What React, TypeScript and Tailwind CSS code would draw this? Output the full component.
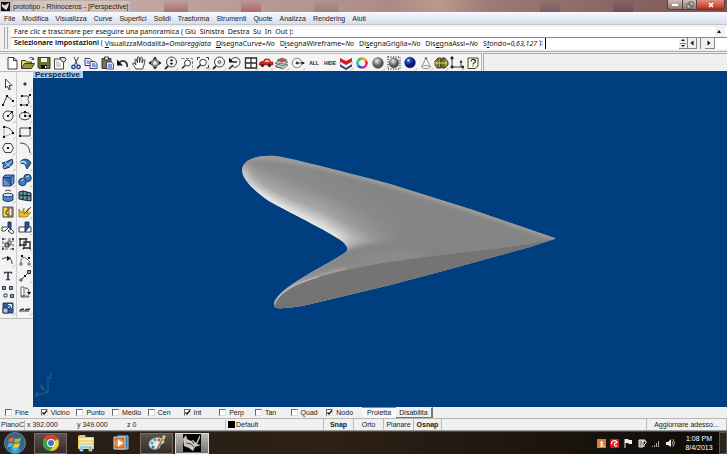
import type { ReactNode } from 'react';

const MENUS = ['File', 'Modifica', 'Visualizza', 'Curve', 'Superfici', 'Solidi', 'Trasforma', 'Strumenti', 'Quote', 'Analizza', 'Rendering', 'Aiuti'];

// before / underlined letter / after / value
const OPTIONS = [
  ['', 'V', 'isualizzaModalità=', 'Ombreggiata'],
  ['', 'D', 'isegnaCurve=', 'No'],
  ['D', 'i', 'segnaWireframe=', 'No'],
  ['Di', 's', 'egnaGriglia=', 'No'],
  ['Dis', 'e', 'gnaAssi=', 'No'],
  ['S', 'f', 'ondo=', '0,63,127'],
];

const OSNAPS: [string, boolean][] = [
  ['Fine', false], ['Vicino', true], ['Punto', false], ['Medio', false], ['Cen', false],
  ['Int', true], ['Perp', false], ['Tan', false], ['Quad', false], ['Nodo', true],
];

const Corner = () => <path d="M13 15.500l2.500-2.500" stroke="#aaa" />;

const lens = (
  <>
    <circle cx="8.500" cy="7" r="5" fill="#f7f7f7" />
    <path d="M5 11l-3 3" strokeWidth="1.800" />
  </>
);

const TOOLBAR: [string, ReactNode][] = [
  ['Nuovo', <path d="M4 2.500h5.500l3.500 3v8.500H4zM9.500 2.500v3h3.500" fill="#fff" />],
  ['Apri', <>
    <path d="M1.500 13V5.500h4l1 1.500h5v2" fill="#e8dc58" />
    <path d="M1.500 13.500l3-5h10l-3 5z" fill="#9c9638" />
    <path d="M9 3.500c2-2 4-1 4.500 1m0 0v-2m0 2h-2" />
  </>],
  ['Salva', <>
    <path d="M2 2.500h12v11H3l-1-1z" fill="#6b722d" />
    <path d="M5 3h6v4H5z" fill="#eee" stroke="none" />
    <path d="M5 10h6v3.500H5z" fill="#111" stroke="none" />
    <path d="M9 11h1.500v2H9z" fill="#eee" stroke="none" />
  </>],
  ['Proprietà', <>
    <path d="M2.500 4h9v10h-9z" fill="#fff" />
    <path d="M8 2.500h5l1 2-2 3-3-2z" fill="#d8dfe8" />
    <path d="M4 7h3M4 9h5M4 11h5" stroke="#999" />
  </>],
  ['Taglia', <>
    <path d="M6 2l3.500 8M10.500 2L6.500 10" stroke="#223" />
    <g stroke="#2747a8" strokeWidth="1.500"><circle cx="5.500" cy="12" r="1.700" /><circle cx="10.500" cy="12" r="1.700" /></g>
  </>],
  ['Copia', <>
    <path d="M2 3.500h5l2 2v5H2z" fill="#fff" stroke="#224" />
    <path d="M7 6.500h5l2 2v5H7z" fill="#dbe6ff" stroke="#233f91" />
    <path d="M3.500 6h3M3.500 8h3M9 9h3M9 11h4" stroke="#233f91" />
  </>],
  ['Incolla', <>
    <path d="M3 3.500h9v10H3z" fill="#77743c" />
    <path d="M5.500 2h4v3h-4z" fill="#ddd" />
    <path d="M7.500 7h5l2 2v5h-7z" fill="#dbe6ff" stroke="#233f91" />
    <path d="M9 10h4M9 12h4" stroke="#233f91" />
  </>],
  ['Annulla', <><path d="M4 8c3-4 9-2 8 4" strokeWidth="1.700" /><path d="M2 4.500v6h6z" fill="#111" stroke="none" /><Corner /></>],
  ['Panoramica', <path d="M5 14c-1-2-3-4-3.500-5.500C2 7.500 3.500 8 5 10L3.800 5c.5-1.500 1.700-1 2 0L6.500 8 6.300 3c.5-1.500 1.800-1.500 2 0l.3 4.500L9.500 3c.5-1.300 1.800-1 1.800.3L11 8l1.300-3c.6-1 1.600-.5 1.500.5-.3 3-1 6-2.300 8.500z" fill="#fff" />],
  ['Ruota vista', <>
    <ellipse cx="8" cy="8" rx="5" ry="2.300" stroke="#555" /><ellipse cx="8" cy="8" rx="2.300" ry="5" stroke="#555" />
    <path d="M8 1.500l2 3H6zM8 14.500l2-3H6zM1.500 8l3-2v4zM14.500 8l-3-2v4z" fill="#111" stroke="none" />
  </>],
  ['Zoom dinamico', <>{lens}<path d="M8.500 4l1.500 2H7zM8.500 10l1.500-2H7z" fill="#111" strokeWidth=".5" /><Corner /></>],
  ['Zoom finestra', <>
    <path d="M2.500 3.500h11v9" strokeDasharray="3 1.500" stroke="#666" /><circle cx="8.500" cy="8" r="3" fill="#fff" /><path d="M6 10.500L3 13.500" strokeWidth="1.600" /><Corner />
  </>],
  ['Zoom estensioni', <>
    <path d="M2.500 5V2.500H5M11 2.500h2.500V5M13.500 10v3H11" /><circle cx="8" cy="7.500" r="3.300" fill="#fff" /><path d="M5.500 10L2 13.500" strokeWidth="1.600" /><Corner />
  </>],
  ['Zoom selezionati', <>{lens}<circle cx="8.500" cy="7" r="1.500" fill="#ddd86d" strokeWidth=".7" /><Corner /></>],
  ['Vista precedente', <>
    <path d="M4 5c3-4 9-3 9 2 0 4-5 7-8 4" /><path d="M2 2.500v5h5z" fill="#111" stroke="none" /><path d="M6 10l-4 4M6 7h4" strokeWidth="1.500" />
  </>],
  ['Quattro viste', <><path d="M2.500 3h11v10h-11zM8 3v10M2.500 8h11" fill="#fff" strokeWidth="1.300" /><Corner /></>],
  ['Vista destra', <>
    <path d="M1 10l1-3 3-.5L7 4h4l2 3h2v3z" fill="#d62616" stroke="#8b150b" strokeWidth=".6" />
    <path d="M7.500 5h3l1 2H6.500z" fill="#fbb" stroke="none" />
    <circle cx="4.500" cy="10.500" r="1.200" fill="#111" /><circle cx="11.500" cy="10.500" r="1.200" fill="#111" /><Corner />
  </>],
  ['Piano C', <>
    <path d="M1 11l5-3 8 2-5 4zM1 8l5-3 8 2-5 4z" fill="#cbd5c1" stroke="#667" />
    <path d="M3 5l5-2 5 2-5 2z" fill="#d34f42" stroke="#744" strokeWidth=".6" /><path d="M2 12l6 1" stroke="#287b3a" /><Corner />
  </>],
  ['Osnap', <>
    <circle cx="7" cy="8" r="4.800" stroke="#777" /><circle cx="7" cy="8" r="1" fill="#111" /><path d="M7 8h7" /><path d="M15 8l-3-1.500v3z" fill="#111" stroke="none" /><Corner />
  </>],
  ['Seleziona tutto', <text x="8" y="10" textAnchor="middle" fontSize="5" fontWeight="700" fill="#222" stroke="none">ALL</text>],
  ['Nascondi', <text x="8" y="10" textAnchor="middle" fontSize="5" fontWeight="700" fill="#222" stroke="none">HIDE</text>],
  ['Livelli', <>
    <path d="M2 9l6 4 6-4v2.500L8 15l-6-3.500z" fill="#273c91" stroke="none" />
    <path d="M2 6.500L8 10l6-3.500V9l-6 3.500L2 9z" fill="#fff" stroke="#888" strokeWidth=".5" />
    <path d="M2 3l6 3 6-3v3.500L8 10 2 6.500z" fill="#d91a21" stroke="none" /><Corner />
  </>],
  ['Proprietà oggetto', <g strokeWidth="2.500" fill="none">
    <path d="M8 3.500a4.500 4.500 0 0 1 4 2.300" stroke="#f2a31b" /><path d="M12 5.800a4.500 4.500 0 0 1 0 4.500" stroke="#e32632" />
    <path d="M12 10.300A4.500 4.500 0 0 1 8 12.500" stroke="#cf2ac0" /><path d="M8 12.500a4.500 4.500 0 0 1-4-2.200" stroke="#3547db" />
    <path d="M4 10.300a4.500 4.500 0 0 1 0-4.500" stroke="#20bad4" /><path d="M4 5.800A4.500 4.500 0 0 1 8 3.500" stroke="#43c64b" />
  </g>],
  ['Ombreggia', <><circle cx="8" cy="8" r="5.300" fill="url(#gray-ball)" stroke="#444" strokeWidth=".6" /><Corner /></>],
  ['Ombreggia selezione', <>
    <path d="M2 2h12v12H2z" strokeDasharray="1 1.500" strokeWidth="2" stroke="#777" />
    <circle cx="8" cy="8" r="4.800" fill="url(#gray-ball)" stroke="#444" strokeWidth=".6" />
  </>],
  ['Rendering', <><circle cx="8" cy="7.500" r="5.300" fill="url(#blue-ball)" stroke="#111c65" strokeWidth=".6" /><Corner /></>],
  ['Faretto', <><path d="M8 3l-4.500 9c2 2 7 2 9 0zM3.500 12c2-2 7-2 9 0" fill="#f8f8f8" stroke="#888" /><path d="M7 4L8 2.500l1 1.500" /><Corner /></>],
  ['Opzioni', <>
    <path d="M2 6l2-2 1-1h3v10H4l-2-3zM9 3h3l3 4v3l-3 3H9z" fill="#a6a42f" />
    <path d="M5 3v10M8 4v9M11 3v10" /><path d="M2 8h12" stroke="#eceb91" /><Corner />
  </>],
  ['Quote', <>
    <path d="M3 3v9h11M12 7v5" /><path d="M2 2h2v2H2zM2 11h2v2H2zM13 11h1.500v2H13z" fill="#111" /><path d="M12 5l1.500 2.500h-3z" fill="#111" stroke="none" /><Corner />
  </>],
  ['Guida', <>
    <path d="M3 3h10v8l-3 2.500H3z" fill="#fffedb" />
    <path d="M6 6.500c0-3 4.500-2.500 4.500 0 0 1.500-2.500 1-2.500 3M8 10.500v1" strokeWidth="1.200" />
  </>],
];

const solidNode = (x: number, y: number) => <path d={`M${x - 1} ${y - 1}h2v2h-2z`} fill="#111" stroke="none" />;
const blueNode = (x: number, y: number) => <path d={`M${x - 1.5} ${y - 1.5}h3v3h-3z`} fill="#7ba5d5" stroke="#223" />;

const PALETTE: [string, ReactNode][] = [
  ['Seleziona', <path d="M5.500 3v9l2-2 1.500 4 1.500-.7L9 9.500h3z" fill="#fff" />],
  ['Punto', <><path d="M7 7h2v2H7z" fill="#555" /><Corner /></>],
  ['Polilinea', <><path d="M3 13L7 4l6 5" />{solidNode(3, 13)}{solidNode(7, 4)}{solidNode(13, 9)}<Corner /></>],
  ['Curva', <><path d="M6 4h4c4 0 0 3 1 4s2 3-1 5H4" /><path d="M4 4v9" stroke="#aaa" strokeDasharray="1 1" />{solidNode(5, 4)}{solidNode(13, 3)}{solidNode(4, 13)}{solidNode(10, 13)}<Corner /></>],
  ['Cerchio', <><circle cx="8" cy="8" r="5" /><path d="M8 8l3-3" />{solidNode(8, 8)}{solidNode(12, 4)}<Corner /></>],
  ['Ellisse', <><ellipse cx="8" cy="8" rx="5.500" ry="3.800" /><path d="M8 4v4h5" stroke="#777" />{solidNode(8, 8)}{solidNode(8, 4)}{solidNode(13, 8)}<Corner /></>],
  ['Arco', <><path d="M4 3c5 0 8 3 9 6" /><path d="M4 3v10l9-4" strokeDasharray="1.500 1" stroke="#666" />{solidNode(4, 3)}{solidNode(4, 13)}{solidNode(13, 9)}<Corner /></>],
  ['Rettangolo', <><path d="M3 4h10v8H3z" />{solidNode(3, 12)}{solidNode(13, 4)}<Corner /></>],
  ['Poligono', <><path d="M5 3.500h6L13.500 8 11 12.500H5L2.500 8z" />{solidNode(8, 8)}<Corner /></>],
  ['Raccordo', <><path d="M3 3c6 0 9 3 10 10" /><Corner /></>],
  ['Superficie', <><path d="M2 7l4-1 6-3 1 4-3 4-6 2-1-2 1-2z" fill="#4778b5" stroke="#152b52" /><path d="M4 12l8-7M5 6l6 5" stroke="#c8e3ff" /><Corner /></>],
  ['Superficie da curve', <><path d="M3 7c1-5 9-5 11 0l-4 6-2-5z" fill="#3370b2" stroke="#142d55" /><path d="M3 7c3-2 5-2 6 1" stroke="#e2f0ff" strokeWidth="1.500" /><Corner /></>],
  ['Parallelepipedo', <><path d="M3 5l2-2h9v8l-3 3H3z" fill="#668fcb" stroke="#17366e" /><path d="M3 5.500h8V14" fill="#3861a0" stroke="#17366e" /><path d="M11 5l3-2" stroke="#17366e" /><Corner /></>],
  ['Unione booleana', <><g fill="#447bc0" stroke="#14325e"><circle cx="10.500" cy="6" r="3.800" /><circle cx="5.500" cy="10" r="3.800" /></g><path d="M4 9l3-2M9 5l3-1" stroke="#c9e0fa" /><Corner /></>],
  ['Proietta curva', <><path d="M3 7h10v5c-3 2-7 2-10 0z" fill="#5685be" stroke="#17366e" /><ellipse cx="8" cy="7" rx="5" ry="1.800" fill="#d3e2f6" stroke="#17366e" /><path d="M5 3c2-1 4-1 6 0" /><Corner /></>],
  ['Mesh', <><path d="M2 4l4-1 8 2v8l-7-1-5-1z" fill="#6699a3" stroke="#112" /><path d="M6 3v9M10 4v8M2 7l12 1" stroke="#112" /></>],
  ['Unisci', <><path d="M3 3h10v10H3z" fill="#f8dc44" stroke="#333" /><path d="M8 3v4H6v3h2v3" /><path d="M9 4h3v8H9z" fill="#eee" stroke="#555" /></>],
  ['Esplodi', <><path d="M2 5l3 4 2-5v6l5-6-2 6 4-2-4 5H2z" fill="#f5bd18" stroke="#765d0b" strokeWidth=".6" /><path d="M7 10l7-7" /><Corner /></>],
  ['Tronca', <><path d="M2 7h7l-4 4H2z" fill="#fff" /><path d="M8 2h3v7l-3-2z" fill="#25549d" stroke="#142d55" /><path d="M8 11l3-2 3 3-2 2z" fill="#eee" /></>],
  ['Suddividi', <><path d="M2 7h12v5H2z" fill="#fff" /><path d="M8 2h4v5l-4 5z" fill="#25549d" stroke="#142d55" /><Corner /></>],
  ['Raggruppa', <><path d="M3 3h10v10H3z" strokeDasharray="3 2" stroke="#555" /><path d="M5 7h4v4H5z" fill="#aaa" /><path d="M8 5h3v4H8z" /><path d="M2.500 2.500h1v1h-1zM12.500 2.500h1v1h-1zM2.500 12.500h1v1h-1zM12.500 12.500h1v1h-1z" fill="#111" /></>],
  ['Separa', <><path d="M3 3h6v6H3zM7 6h6v6H7z" strokeWidth="1.300" /><path d="M2.500 2.500h1v1h-1zM9 2.500h1v1H9zM2.500 9h1v1h-1zM12.500 12h1v1h-1zM6 12h1v1H6z" fill="#111" /><Corner /></>],
  ['Modifica punti', <><path d="M2 7c6-3 10-1 10 5" /><path d="M7 4l4 2-4 3z" fill="#111" stroke="none" /><Corner /></>],
  ['Punti di controllo', <><path d="M4 12C3 4 7 3 13 10" stroke="#666" />{solidNode(5, 4)}{solidNode(12, 6)}<path d="M3 11h2v2H3zM11 11h2v2h-2z" fill="#fff" stroke="#555" /><Corner /></>],
  ['Testo', <text x="8" y="12" textAnchor="middle" fontSize="13" fontFamily="Liberation Serif, serif" fill="#222" stroke="#222" strokeWidth=".3">T</text>],
  ['Sposta', <><path d="M5 11l6-6" />{blueNode(12, 4)}<path d="M3 11h2v2H3z" fill="#fff" />{solidNode(8, 8)}<Corner /></>],
  ['Copia oggetto', <>{blueNode(4, 4)}{blueNode(11, 4)}{blueNode(12, 12)}<path d="M4 10h3v3H4z" fill="#fff" /></>],
  ['Ruota', <><path d="M4 3h3v9H4zM4 12h8v1H4z" fill="#fff" stroke="#555" /><path d="M8 4c4 0 4 3 4 5" /><path d="M12 11l-2-3h4z" fill="#111" stroke="none" /></>],
  ['Scala', <><path d="M3 3h10v10H3z" fill="#2d609c" stroke="#172f55" /><path d="M3 8h5v5H3z" fill="#a5c7ec" /><path d="M8 8l3-3M8 4.500h3.500V8" stroke="#fff" /><Corner /></>],
  ['Allinea', <><path d="M3 10l2-1h2l-2 1zM8 10l2-1h3l-2 1z" fill="#3670ae" /><path d="M2 11h10" /><Corner /></>],
];

const Icon = ({ children }: { children: ReactNode }) => (
  <svg viewBox="0 0 16 16" className="w-4 h-4 shrink-0" fill="none" stroke="#2c2c2c" strokeWidth=".9" aria-hidden="true">
    {children}
  </svg>
);

const TitleBar = () => (
  <header className="flex items-center h-3 shrink-0 pl-px bg-linear-to-r from-[#c9b6b0] via-[#b08f89] to-[#7b5450]">
    <svg viewBox="0 0 10 10" className="w-[9px] h-[9px]">
      <path d="M0 0h10v10H0z" fill="#111" />
      <path d="M1 2l3 2 3-2 2-1-1 4-2 4-3-2-2-2z" fill="#ddd" />
    </svg>
    <h1 className="ml-0.5 px-px text-[7px] leading-[11px] text-[#241c1c] bg-white/25">prototipo - Rhinoceros - [Perspective]</h1>
    <div className="flex-1 h-full flex justify-around px-2 opacity-40">
      <span className="w-6 bg-linear-to-t from-[#8b2929] to-transparent" />
      <span className="w-5 bg-linear-to-t from-[#a51d26] to-transparent" />
      <span className="w-6 bg-linear-to-t from-[#6c6e52] to-transparent" />
      <span className="w-24 bg-linear-to-r from-transparent via-[#e2b8a5] to-transparent" />
      <span className="w-5 bg-linear-to-t from-[#4f4a68] to-transparent" />
      <span className="w-5 bg-linear-to-t from-[#3f3752] to-transparent" />
    </div>
    <div className="flex self-start h-[10px] mr-0.5 border border-t-0 border-[#57403f] rounded-b-sm overflow-hidden">
      <button aria-label="Riduci a icona" className="w-[15px] flex items-center justify-center bg-linear-to-b from-[#cfc0be] to-[#8c7775] border-r border-[#57403f]">
        <span className="w-[6px] h-0.5 bg-white" />
      </button>
      <button aria-label="Ripristina" className="w-[14px] flex items-center justify-center bg-linear-to-b from-[#cfc0be] to-[#8c7775] border-r border-[#57403f]">
        <svg viewBox="0 0 8 8" className="w-2 h-2" fill="#ddd" stroke="#444" strokeWidth=".8"><path d="M3 1h4v4H3zM1 3h4v4H1z" /></svg>
      </button>
      <button aria-label="Chiudi" className="w-[27px] flex items-center justify-center bg-linear-to-b from-[#df8d7c] to-[#b82b18]">
        <svg viewBox="0 0 8 8" className="w-2 h-2" stroke="#fff" strokeWidth="1.600"><path d="M2 2l4 4M6 2L2 6" /></svg>
      </button>
    </div>
  </header>
);

const Arrow = ({ d }: { d: string }) => (
  <svg viewBox="0 0 8 8" className="w-2 h-2" fill="#111" aria-hidden="true"><path d={d} /></svg>
);

const CommandArea = () => (
  <section className="flex h-[27px] shrink-0 pt-0.5 pb-0.5 pl-1 bg-[#f0f0f0] border-t border-[#c5c5c5]">
    <div className="w-1 mr-[3px] border-x border-[#aaa]" />
    <div className="flex-1 min-w-0 flex flex-col bg-white font-['Noto_Sans','Liberation_Sans',sans-serif] text-[7px] leading-[9px] text-[#111] whitespace-pre">
      <div className="flex h-[11px] pl-[3px] border-b border-[#888]">
        <p className="flex-1">Fare clic e trascinare per eseguire una panoramica ( Giù  Sinistra  Destra  Su  In  Out ):</p>
        <button aria-label="Scorri cronologia" className="w-[10px] mr-0.5 bg-[#f0f0f0]"><Arrow d="M4 2l2 3H2z" /></button>
      </div>
      <div className="flex h-[11px] pl-[3px]">
        <label htmlFor="command"><span className="font-semibold text-black">Selezionare impostazioni</span> ( </label>
        <div className="flex gap-[5px]">
          {OPTIONS.map(([pre, key, post, value]) => (
            <button key={post}>{pre}<u>{key}</u>{post}<i>{value}</i></button>
          ))}
        </div>
        <span> ):</span>
        <input id="command" className="flex-1 w-0 min-w-0 ml-0.5 border-l border-black outline-none" />
        <div className="flex shrink-0 bg-[#f0f0f0] mr-3">
          <button aria-label="Storico" className="w-[9px] border-b border-r border-[#888]"><Arrow d="M4 0l2 2H2zM4 8l2-2H2zM1 4h6v.6H1z" /></button>
          <button aria-label="Sinistra" className="w-[9px] border-b border-r border-[#888] flex items-center"><Arrow d="M5.500 1.500v5L2.500 4z" /></button>
          <span className="w-1 mr-1 border-r border-[#888]" />
          <button aria-label="Destra" className="w-[10px] border-b border-r border-[#888] flex items-center"><Arrow d="M2.500 1.500v5l3-2.500z" /></button>
        </div>
      </div>
    </div>
  </section>
);

const Viewport = () => (
  <main className="relative flex-1 min-w-0 bg-[#003f7f] overflow-hidden">
    <svg viewBox="33 71 694 336" className="w-full h-full" role="img" aria-label="Modello ombreggiato">
      <defs>
        <linearGradient id="body" gradientUnits="userSpaceOnUse" x1="300" y1="160" x2="280" y2="207">
          <stop offset="0" stopColor="#858585" />
          <stop offset=".4" stopColor="#8c8c8c" />
          <stop offset=".75" stopColor="#a6a6a6" />
          <stop offset="1" stopColor="#d2d2d2" />
        </linearGradient>
        <linearGradient id="fade" gradientUnits="userSpaceOnUse" x1="325" y1="210" x2="410" y2="225">
          <stop offset="0" stopColor="#858585" stopOpacity="0" />
          <stop offset="1" stopColor="#858585" />
        </linearGradient>
        <linearGradient id="fold" gradientUnits="userSpaceOnUse" x1="345" y1="240" x2="352" y2="270">
          <stop offset="0" stopColor="#7e7e7e" />
          <stop offset="1" stopColor="#8c8c8c" />
        </linearGradient>
        <filter id="soft" x="-20%" y="-20%" width="140%" height="140%"><feGaussianBlur stdDeviation="5" /></filter>
        <filter id="thin" x="-20%" y="-20%" width="140%" height="140%"><feGaussianBlur stdDeviation="2" /></filter>
        <clipPath id="wing">
          <path d="M242 170C242 161 254 154 277 156C298 160 330 168 390 184L473 210L556 238.500L530 247L450 269L390 285L315 303C300 307 277 310 275 307C272 302 277 296 287 288C304 275 332 262 346 252Q350 249 343 242C330 232 300 218 269 201C255 191 242 180 242 170Z" />
        </clipPath>
      </defs>
      <g clipPath="url(#wing)">
        <path d="M230 140h340v180H230z" fill="url(#body)" />
        <path d="M230 140h340v180H230z" fill="url(#fade)" />
        <path d="M241 168C242 182 256 193 269 201C300 218 330 232 345 243" fill="none" stroke="#dedede" strokeWidth="9" filter="url(#soft)" />
        <path d="M250 188C265 200 300 218 338 238" fill="none" stroke="#f2f2f2" strokeWidth="3" filter="url(#thin)" />
        <path d="M272 312C277 290 320 266 348 250C380 239 430 236 556 238L450 270z" fill="#848484" filter="url(#thin)" />
        <path d="M268 304C282 284 322 264 348 251C355 246 375 243 400 248L440 262L290 292z" fill="url(#fold)" filter="url(#soft)" />
        <path d="M242 163C252 152 276 154 390 184L473 210L556 238" fill="none" stroke="#a7a7a7" strokeWidth="4" filter="url(#thin)" />
        <path d="M273 307C275 291 303 281 345 270" fill="none" stroke="#b4b4b4" strokeWidth="3" filter="url(#thin)" />
        <path d="M274 304C279 294 290 285 322 276C370 262 450 254 495 249Q530 245 556 238.500L560 290L270 320z" fill="#747474" />
        <path d="M274 305C279 294 290 285 318 277" fill="none" stroke="#c4c4c4" />
      </g>
      <g fill="none" stroke="#48617c" strokeWidth=".8">
        <path d="M48 392V377M48 392l-11 3M48 392l-7-4" />
        <path d="M49 374h3l-3 4h3M40 385l4 4M43 385l-2 4M35 393l2 2M38 392l-2 5" />
      </g>
    </svg>
    <h2 className="absolute left-0 top-0 w-[50px] pl-0.5 bg-[#a9cbea] text-[8px] leading-[7px] font-bold text-[#0d2545]">Perspective</h2>
  </main>
);

const OsnapBar = () => (
  <div className="flex h-3 shrink-0 items-center bg-[#f0f0f0] border-b border-[#b5b5b5] text-[7px] leading-[10px]">
    <fieldset className="grid grid-cols-10 w-[358px] ml-1 pl-px">
      {OSNAPS.map(([name, on]) => (
        <label key={name} className="flex items-center gap-[3px]">
          <span className="grid w-[7px] h-[7px]">
            <input type="checkbox" defaultChecked={on} className="peer col-start-1 row-start-1 appearance-none w-[7px] h-[7px] bg-white border border-r-[#ddd] border-b-[#ddd] border-t-[#666] border-l-[#666]" />
            <svg viewBox="0 0 7 7" className="col-start-1 row-start-1 w-[7px] h-[7px] invisible peer-checked:visible pointer-events-none" fill="none" stroke="#111" strokeWidth="1.300"><path d="M1.500 3.500l1.500 1.500 3-3.500" /></svg>
          </span>
          {name}
        </label>
      ))}
    </fieldset>
    <button className="h-full w-[34px] border-y border-t-[#888] border-b-transparent bg-[#f8f8f8]">Proietta</button>
    <button className="h-full w-[37px] border-y border-r-2 border-t-transparent border-b-[#777] border-r-[#777]">Disabilita</button>
  </div>
);

const StatusBar = () => (
  <footer className="flex h-3 shrink-0 items-center bg-[#f0f0f0] border-b border-[#999] text-[7px] leading-[10px] whitespace-nowrap">
    <span className="w-[25px] pl-px border-r border-[#bbb]">PianoC</span>
    <span className="w-[50px] pl-0.5">x 392.000</span>
    <span className="w-[50px] pl-0.5">y 349.000</span>
    <span className="flex-1 max-w-[100px] pl-0.5">z 0</span>
    <span className="w-[98px] flex items-center gap-px pl-0.5 border-l border-[#bbb]"><span className="w-[7px] h-[7px] bg-black" />Default</span>
    <button className="w-[30px] h-full font-bold border-l border-[#bbb]">Snap</button>
    <button className="w-[30px] h-full border-l border-[#bbb]">Orto</button>
    <button className="w-[30px] h-full border-l border-[#bbb]">Planare</button>
    <button className="w-[29px] h-full font-bold border-x border-[#bbb]">Osnap</button>
    <button className="ml-auto w-[81px] h-full border-x border-[#bbb]">Aggiornare adesso...</button>
  </footer>
);

const Taskbar = () => (
  <nav className="flex h-[23px] shrink-0 items-center bg-linear-to-r from-[#241d15] via-[#2e2116] via-45% to-[#0e0b09] border-t border-[#504a42] text-white">
    <button aria-label="Start" className="w-[34px] flex justify-center pr-1">
      <svg viewBox="0 0 22 22" className="w-[22px] h-[22px]">
        <circle cx="11" cy="11" r="10.500" fill="url(#orb)" stroke="#6da8ca" strokeWidth=".7" />
        <path d="M5 7q3-2 5-1l-1 4q-3-1-5 1z" fill="#ef6534" /><path d="M11 6.500q3 1 6-1l-1 4q-3 2-6 1z" fill="#8dc63f" />
        <path d="M4 12q3-2 5-1l-1 4q-3-1-5 1z" fill="#49b6ee" /><path d="M10 11.500q3 1 6-1l-1 4q-3 2-6 1z" fill="#fcc62c" />
      </svg>
    </button>
    <button aria-label="Chrome" className="w-[33px] h-[21px] flex items-center justify-center border border-[#776d65] bg-linear-to-b from-[#5a524c] to-[#352e27]">
      <svg viewBox="0 0 18 18" className="w-[18px] h-[18px]">
        <circle cx="9" cy="9" r="8" fill="#f8cc2d" />
        <path d="M9 9L2 5A8 8 0 0 1 16 5z" fill="#dc3d2c" /><path d="M9 9L2 5a8 8 0 0 0 6 12l4-6z" fill="#35a34a" />
        <circle cx="9" cy="9" r="4" fill="#fff" /><circle cx="9" cy="9" r="3" fill="#3975c5" />
      </svg>
    </button>
    <button aria-label="Esplora risorse" className="w-[37px] flex justify-center">
      <svg viewBox="0 0 20 18" className="w-5 h-[18px]">
        <path d="M2 2l2-1h5l1 2h8v12H2z" fill="#e6c760" /><path d="M3 4h14v10H3z" fill="#faefb1" /><path d="M3 7h14M3 10h14" stroke="#dbbd5f" />
        <path d="M4 17v-5h12v5h-3v-3H7v3z" fill="#72bce4" stroke="#dcf2ff" strokeWidth=".6" />
      </svg>
    </button>
    <button aria-label="Media Player" className="w-[33px] flex justify-center">
      <svg viewBox="0 0 16 16" className="w-4 h-4">
        <path d="M5 1h10v13H5z" fill="#367bae" stroke="#92c9e6" /><path d="M1 2h11v12H1z" fill="#cf651e" stroke="#c5dce8" />
        <circle cx="6.500" cy="8" r="4.500" fill="#ed914c" /><path d="M5 4.500v7L10 8z" fill="#fff" />
      </svg>
    </button>
    <button aria-label="Paint" className="w-[33px] h-[21px] ml-[3px] flex items-center justify-center border border-[#776d65] bg-linear-to-b from-[#5a524c] to-[#352e27]">
      <svg viewBox="0 0 20 18" className="w-5 h-[18px]">
        <path d="M2 10C2 4 14 1 17 7c1 3-4 2-4 5 0 4-11 5-11-2z" fill="#dcecf4" stroke="#89aabb" />
        <circle cx="5" cy="9" r="1.500" fill="#3a9ed3" /><circle cx="8" cy="6" r="1.500" fill="#54a944" /><circle cx="12" cy="6" r="1.500" fill="#e44d32" /><circle cx="6" cy="13" r="1.500" fill="#6659a4" />
        <path d="M10 15l6-11" stroke="#a95e26" strokeWidth="1.500" /><path d="M15 5l1-4 3 1-2 4z" fill="#efc361" />
      </svg>
    </button>
    <button aria-label="Rhinoceros" className="w-[34px] h-[21px] ml-0.5 flex items-center justify-center border border-[#ddd] bg-linear-to-b from-[#bcbab7] to-[#777470]">
      <svg viewBox="0 0 18 18" className="w-[18px] h-[18px]">
        <path d="M0 0h18v18H0z" fill="#050505" />
        <path d="M0 5l3-4 1 4 4 2 2-1 3 3 4-8v3l-3 6 4 1-6 2-2 4-4-3-5-2z" fill="#c8c8c8" /><path d="M3 9l5 1 3 3M9 7l2 3" stroke="#444" fill="none" />
      </svg>
    </button>
    <div className="flex-1" />
    <div className="flex items-center gap-1">
      <svg viewBox="0 0 10 10" className="w-[9px] h-[9px]"><path d="M0 0h10v10H0z" fill="#e87528" /><path d="M3 8h5M5 8V2M3 4h4M4 6h3" stroke="#fff" /></svg>
      <svg viewBox="0 0 10 10" className="w-[9px] h-[9px]"><path d="M0 0h10v10H0z" fill="#d41928" /><path d="M2 6a3 3 0 0 1 6-2L5 5v2q1 2 3 0" fill="none" stroke="#fff" strokeWidth="1.200" /></svg>
      <svg viewBox="0 0 10 10" className="w-[10px] h-[10px]"><path d="M2 1v9" stroke="#eee" /><path d="M2 1h3l1 1h3v4H6L5 5H2z" fill="#eee" /></svg>
      <svg viewBox="0 0 10 10" className="w-[10px] h-[10px]" fill="none" stroke="#eee"><path d="M2 2h4v7H2z" fill="#999" /><path d="M7 1v3M5 3h4v2L7 7v2" /></svg>
      <svg viewBox="0 0 10 10" className="w-[10px] h-[10px]" fill="#aaa"><path d="M1 8h1v1H1zM3 7h1v2H3zM5 5h1v4H5zM7 3h1v6H7z" /></svg>
      <svg viewBox="0 0 10 10" className="w-[10px] h-[10px]"><path d="M1 4h2l3-3v8L3 7H1z" fill="#eee" /><path d="M7 3q2 2 0 4M8 1q3 4 0 8" fill="none" stroke="#ccc" strokeWidth=".8" /></svg>
    </div>
    <time className="w-[36px] ml-1.5 text-[7px] leading-[9px] text-center">1:08 PM<br />8/4/2013</time>
    <button aria-label="Mostra desktop" className="w-2 h-full ml-0.5 border border-[#59544e] bg-[#29241f]" />
  </nav>
);

export default function App() {
  return (
    <div className="h-screen flex flex-col overflow-hidden bg-[#f0f0f0] text-[#1a1a1a] font-['Liberation_Sans',Arial,sans-serif]">
      <svg className="absolute w-0 h-0" aria-hidden="true">
        <defs>
          <radialGradient id="gray-ball" cx=".4" cy=".3"><stop stopColor="#eee" /><stop offset="1" stopColor="#555" /></radialGradient>
          <radialGradient id="blue-ball" cx=".35" cy=".3"><stop stopColor="#fff" /><stop offset=".35" stopColor="#334ed1" /><stop offset="1" stopColor="#08166e" /></radialGradient>
          <radialGradient id="orb" cx=".5" cy=".8"><stop stopColor="#5bc8ed" /><stop offset=".6" stopColor="#24699c" /><stop offset="1" stopColor="#3c6180" /></radialGradient>
        </defs>
      </svg>
      <TitleBar />
      <nav className="flex h-3 shrink-0 items-center gap-[7px] pl-1 bg-linear-to-b from-[#f7f9fd] to-[#d6deef] text-[7px] leading-[11px]">
        {MENUS.map((name) => <button key={name}>{name}</button>)}
      </nav>
      <CommandArea />
      <div className="flex h-5 shrink-0 items-end border-t border-[#aaa]">
        <div className="flex w-[482px] h-[18px] pl-1 border-t border-r border-[#bbb] bg-[#f4f4f4]">
          {TOOLBAR.map(([name, icon]) => (
            <button key={name} aria-label={name} className="flex-1 min-w-0 flex items-center justify-center"><Icon>{icon}</Icon></button>
          ))}
        </div>
        <div className="flex-1 h-[18px] ml-px border-t border-l border-[#aaa]" />
      </div>
      <div className="flex flex-1 min-h-0">
        <aside className="w-[33px] shrink-0 bg-[#f0f0f0]">
          <div className="grid grid-cols-2 pt-1 pb-0.5 border-y border-[#bbb] bg-linear-to-r from-[#f3f3f3] from-48% via-[#bbb] via-49% to-[#f3f3f3] to-52%">
            {PALETTE.map(([name, icon]) => (
              <button key={name} aria-label={name} className="h-4 flex items-center justify-center"><Icon>{icon}</Icon></button>
            ))}
          </div>
        </aside>
        <Viewport />
      </div>
      <OsnapBar />
      <StatusBar />
      <Taskbar />
    </div>
  );
}
